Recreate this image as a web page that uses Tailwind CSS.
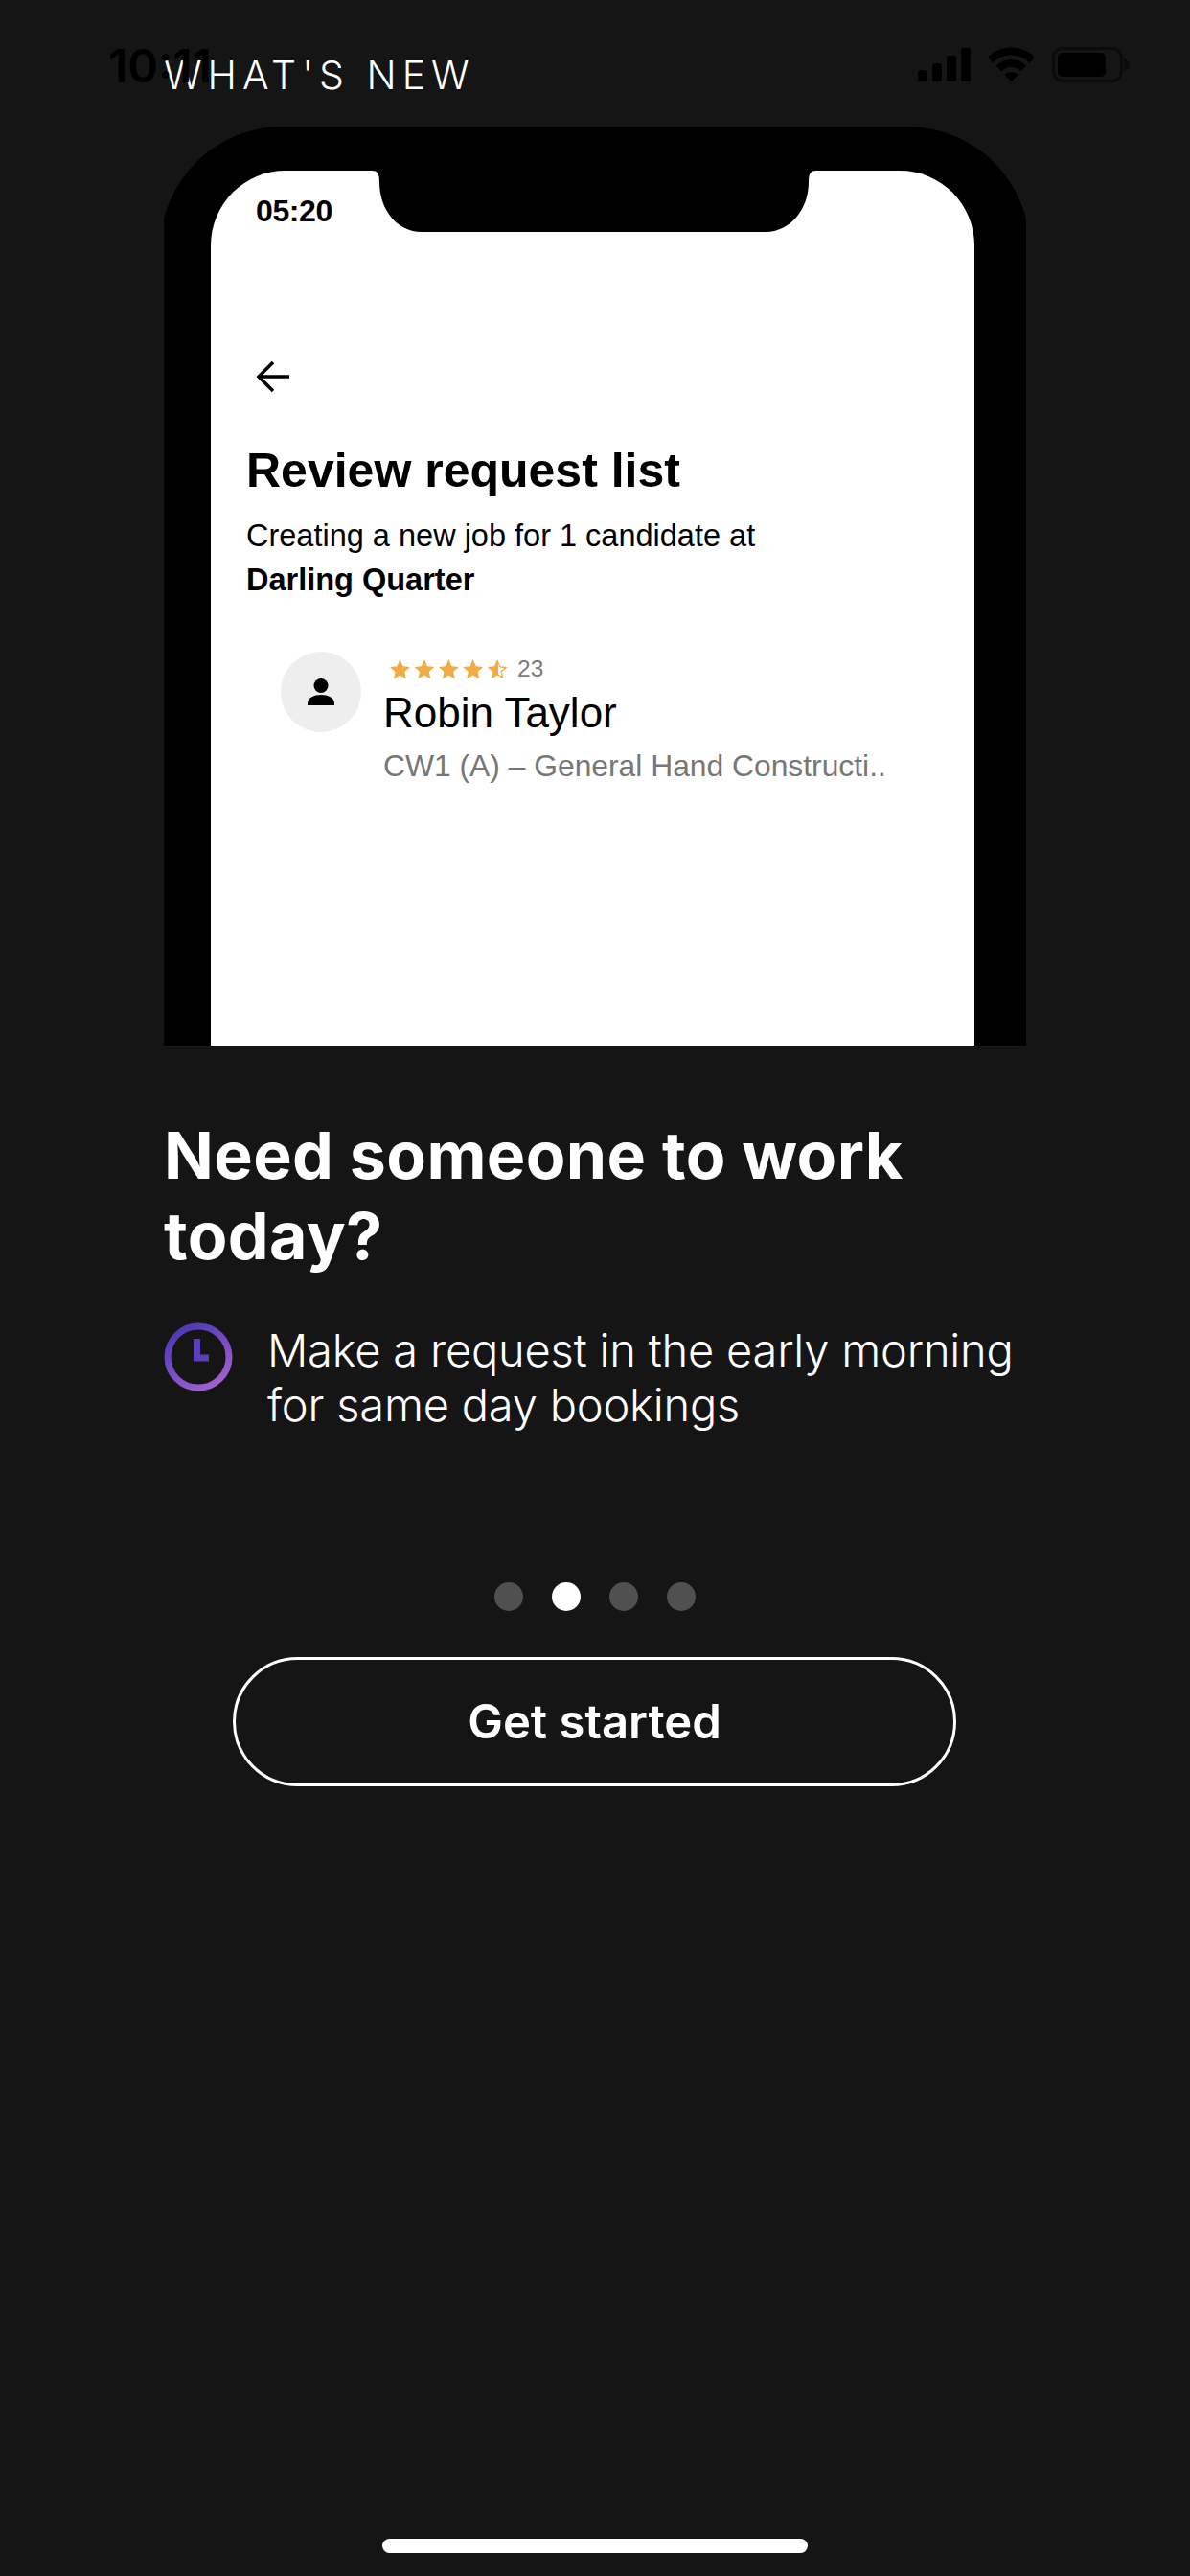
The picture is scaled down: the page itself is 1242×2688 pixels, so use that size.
<!DOCTYPE html>
<html lang="en">
<head>
    <meta charset="UTF-8">
    <meta name="viewport" content="width=device-width, initial-scale=1.0">
    <title>What's new</title>
    <script src="https://cdn.jsdelivr.net/npm/@tailwindcss/browser@4"></script>
</head>
<body class="bg-[#151515]">
    <div class="relative w-[1242px] h-[2688px] overflow-hidden bg-[#151515] font-['Inter',sans-serif]">
        <!-- Status bar, black on dark like the original -->
        <span class="absolute left-[113px] top-[41px] text-[48px] leading-[56px] font-semibold text-black">10:11</span>
        <div class="absolute left-[958px] top-[49px] flex items-start">
            <svg width="55" height="36" viewBox="0 0 55 36" fill="#000">
                <rect x="0" y="24" width="10" height="12" rx="2.5"/>
                <rect x="15" y="17" width="10" height="19" rx="2.5"/>
                <rect x="30" y="9" width="10" height="27" rx="2.5"/>
                <rect x="45" y="1" width="10" height="35" rx="2.5"/>
            </svg>
            <svg class="ml-[19px]" width="47" height="36" viewBox="0 0 47 36" fill="none" stroke="#000" stroke-width="8">
                <path d="M1.6 13.6A31 31 0 0 1 45.4 13.6"/>
                <path d="M10.4 22.4A18.5 18.5 0 0 1 36.6 22.4"/>
                <path d="M23.5 36L16.4 28.9A10 10 0 0 1 30.6 28.9Z" fill="#000" stroke="none"/>
            </svg>
            <svg class="ml-[19px]" width="81" height="37" viewBox="0 0 81 37">
                <rect x="1.5" y="1.5" width="71" height="34" rx="10" fill="none" stroke="#0b0b0b" stroke-width="3"/>
                <rect x="6" y="6" width="50" height="25" rx="5" fill="#000"/>
                <path d="M75 12C79 13 81 16 81 18.500C81 21 79 24 75 25Z" fill="#0b0b0b"/>
            </svg>
        </div>

        <div class="flex flex-col pl-[171px] pt-[54px]">
            <h2 class="text-[41px] leading-[48px] font-light tracking-[6px] text-white">WHAT'S NEW</h2>

            <!-- Phone preview -->
            <div class="mt-[30px] w-[900px] h-[959px] overflow-hidden">
                <div class="relative w-[908px] h-[959px] -ml-1 rounded-t-[128px] bg-black pl-[53px] pt-[46px]">
                    <div class="relative w-[797px] h-[913px] rounded-t-[78px] bg-white font-['Liberation_Sans',sans-serif] text-black">
                        <svg class="absolute left-[168px] top-0" width="464" height="64" viewBox="0 0 464 64" fill="#000">
                            <path d="M0 0C6 0 8 3 8 12C8 40 26 64 52 64H411C437 64 456 40 456 12C456 3 458 0 464 0Z"/>
                        </svg>
                        <p class="absolute left-[47px] top-[19px] text-[32px] leading-[46px] font-bold tracking-[-0.4px]">05:20</p>

                        <div class="flex flex-col pl-[37px] pt-[198px]">
                            <svg class="ml-[10px]" width="36" height="34" viewBox="0 0 36 34" fill="none" stroke="#000" stroke-width="3.5">
                                <path d="M35 17H3M18 2L3 17L18 32"/>
                            </svg>
                            <h3 class="mt-[51px] text-[50px] leading-[60px] font-bold">Review request list</h3>
                            <p class="mt-[15px] text-[32.5px] leading-[46px]">Creating a new job for 1 candidate at<br><span class="font-bold">Darling Quarter</span></p>

                            <div class="mt-[52px] ml-[36px] flex">
                                <div class="flex w-[84px] h-[84px] shrink-0 items-center justify-center rounded-full bg-[#eeeeee]">
                                    <svg width="28" height="28" viewBox="0 0 28 28" fill="#000">
                                        <circle cx="14" cy="7.500" r="7.500"/>
                                        <path d="M0 26C0 20 7 17 14 17C21 17 28 20 28 26V28H0Z"/>
                                    </svg>
                                </div>
                                <div class="ml-[23px] flex flex-col">
                                    <div class="flex items-center pl-[7px] pt-[6px]">
                                        <svg width="127" height="21" viewBox="0 0 127 21" fill="#f0ac45">
                                            <path d="M10.500 0L13.600 7.300L21 7.900L15.400 12.900L17 20.500L10.500 16.500L4 20.500L5.600 12.900L0 7.900L7.400 7.300Z"/>
                                            <path transform="translate(25.400 0)" d="M10.500 0L13.600 7.300L21 7.900L15.400 12.900L17 20.500L10.500 16.500L4 20.500L5.600 12.900L0 7.900L7.400 7.300Z"/>
                                            <path transform="translate(50.800 0)" d="M10.500 0L13.600 7.300L21 7.900L15.400 12.900L17 20.500L10.500 16.500L4 20.500L5.600 12.900L0 7.900L7.400 7.300Z"/>
                                            <path transform="translate(76.200 0)" d="M10.500 0L13.600 7.300L21 7.900L15.400 12.900L17 20.500L10.500 16.500L4 20.500L5.600 12.900L0 7.900L7.400 7.300Z"/>
                                            <g transform="translate(101.600 0)">
                                                <path d="M10.500 0L13.600 7.300L21 7.900L15.400 12.900L17 20.500L10.500 16.500L4 20.500L5.600 12.900L0 7.900L7.400 7.300Z"/>
                                                <path d="M11.500 4.500L12.800 8.600L17.600 9.100L13.900 12.400L15 17.600L11.500 15.500Z" fill="#fff"/>
                                            </g>
                                        </svg>
                                        <span class="ml-[6px] text-[24.5px] leading-[24px] text-[#7c7c7c]">23</span>
                                    </div>
                                    <p class="mt-[9px] text-[44px] leading-[50px]">Robin Taylor</p>
                                    <p class="mt-[8px] text-[31.8px] leading-[44px] text-[#777777] whitespace-nowrap">CW1 (A) – General Hand Constructi..</p>
                                </div>
                            </div>
                        </div>
                    </div>
                </div>
            </div>

            <h1 class="mt-[72px] w-[900px] text-[68px] leading-[84px] font-bold tracking-[0.4px] text-white">Need someone to work today?</h1>

            <div class="mt-[49px] flex items-start">
                <svg class="shrink-0" width="72" height="72" viewBox="0 0 72 72" fill="none">
                    <defs>
                        <linearGradient id="clock" x1="0.2" y1="0" x2="0.8" y2="1">
                            <stop offset="0" stop-color="#4c38b4"/>
                            <stop offset="1" stop-color="#a362cf"/>
                        </linearGradient>
                    </defs>
                    <circle cx="36" cy="36" r="32" stroke="url(#clock)" stroke-width="7"/>
                    <path d="M34.500 17V37H47" stroke="#5a3fb8" stroke-width="7"/>
                </svg>
                <p class="ml-[36px] text-[47px] leading-[57px] font-light tracking-[-0.2px] text-white">Make a request in the early morning<br>for same day bookings</p>
            </div>
        </div>

        <!-- Pager -->
        <div class="mt-[157px] ml-[516px] flex gap-[30px]">
            <span class="w-[30px] h-[30px] rounded-full bg-[#505050]"></span>
            <span class="w-[30px] h-[30px] rounded-full bg-white"></span>
            <span class="w-[30px] h-[30px] rounded-full bg-[#505050]"></span>
            <span class="w-[30px] h-[30px] rounded-full bg-[#505050]"></span>
        </div>

        <button class="mt-[48px] ml-[243px] flex w-[755px] h-[135px] items-center justify-center rounded-full border-[3px] border-white text-[49px] font-semibold text-white">Get started</button>

        <div class="absolute left-[399px] top-[2649px] w-[444px] h-[15px] rounded-full bg-white"></div>
    </div>
</body>
</html>
